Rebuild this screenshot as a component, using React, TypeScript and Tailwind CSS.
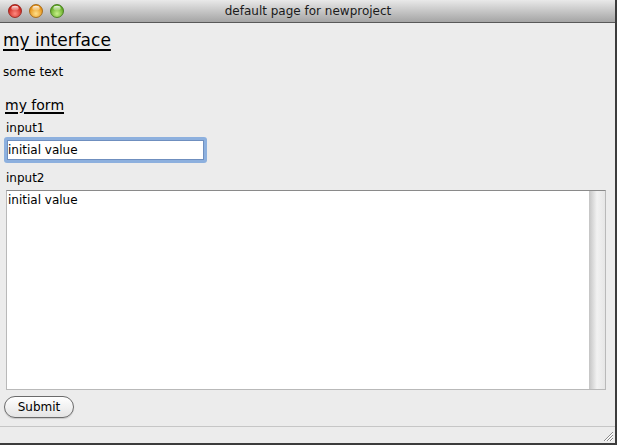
import React from "react";

function Light({ c1, c2, c3, id }: { c1: string; c2: string; c3: string; id: string }) {
  return (
    <svg width="14" height="14" viewBox="0 0 14 14">
      <defs>
        <radialGradient id={`g${id}`} cx="50%" cy="70%" r="60%">
          <stop offset="0%" stopColor={c1} />
          <stop offset="100%" stopColor={c2} />
        </radialGradient>
        <linearGradient id={`h${id}`} x1="0" y1="0" x2="0" y2="1">
          <stop offset="0%" stopColor="#ffffff" stopOpacity="0.9" />
          <stop offset="100%" stopColor="#ffffff" stopOpacity="0.1" />
        </linearGradient>
      </defs>
      <circle cx="7" cy="7" r="6.5" fill={`url(#g${id})`} stroke={c3} strokeWidth="0.8" />
      <ellipse cx="7" cy="4.2" rx="3.6" ry="2.4" fill={`url(#h${id})`} />
    </svg>
  );
}

export default function App() {
  const ui = { fontFamily: '"DejaVu Sans", "Liberation Sans", sans-serif' };
  const comic = { fontFamily: '"Comic Sans MS", "DejaVu Sans", sans-serif' };
  return (
    <div
      className="w-[617px] h-[445px] flex flex-col bg-[#ececec] border-r-2 border-b-2 border-[#3c3c3c] text-black overflow-hidden"
      style={ui}
    >
      {/* title bar */}
      <div className="h-[23px] shrink-0 flex items-center relative bg-gradient-to-b from-[#e9e9e9] to-[#a5a5a5] border-b border-[#595959]">
        <div className="flex items-center gap-[7px] pl-[8px]">
          <Light id="r" c1="#ff8a80" c2="#c91f16" c3="#8e1a14" />
          <Light id="y" c1="#ffe08a" c2="#e38b0c" c3="#9a5d0a" />
          <Light id="g" c1="#c9f08a" c2="#5aa61d" c3="#3b7212" />
        </div>
        <div className="absolute inset-0 flex items-center justify-center text-[12px] text-[#1a1a1a] pl-[1px]">
          default page for newproject
        </div>
      </div>

      {/* content */}
      <div className="flex-1 flex flex-col">
        <div className="pl-[3px] pt-[7px] text-[17px] leading-[20px] underline underline-offset-[3px] decoration-[1.5px]" style={comic}>
          my interface
        </div>
        <div className="pl-[3px] mt-[15px] text-[12px] leading-[15px]">some text</div>
        <div className="pl-[5px] mt-[17px] text-[14px] leading-[17px] underline underline-offset-[2px] decoration-[1.5px]" style={comic}>
          my form
        </div>
        <div className="pl-[6px] mt-[7px] text-[12px] leading-[15px]">input1</div>
        <div className="pl-[4px] mt-[1px] flex">
          <div className="w-[203px] h-[26px] rounded-[3px] bg-[#8db0de] p-[3px]">
            <div className="w-full h-full bg-white border border-[#6f8fbf] flex items-center pl-[0px] text-[12px] leading-[15px]">
              initial value
            </div>
          </div>
        </div>
        <div className="pl-[6px] mt-[8px] text-[12px] leading-[15px]">input2</div>
        <div className="pl-[6px] mt-[4px] flex">
          <div className="w-[600px] h-[200px] bg-white border border-[#b9b9b9] border-t-[#8a8a8a] flex">
            <div className="flex-1 pl-[1px] pt-[2px] text-[12px] leading-[15px]">initial value</div>
            <div className="w-[16px] h-full bg-gradient-to-r from-[#c4c4c4] via-[#f2f2f2] to-[#e6e6e6]" />
          </div>
        </div>
        <div className="pl-[4px] mt-[6px] flex">
          <div className="w-[70px] h-[22px] rounded-full border border-[#6b6b6b] bg-gradient-to-b from-[#ffffff] to-[#e4e4e4] flex items-center justify-center text-[12px] leading-[15px] shadow-[0_1px_1px_rgba(0,0,0,0.15)]">
            Submit
          </div>
        </div>
      </div>

      {/* status bar */}
      <div className="h-[17px] shrink-0 border-t border-[#c6c6c6] flex justify-end items-end">
        <svg width="12" height="12" viewBox="0 0 12 12" className="mr-[1px] mb-[1px]">
          <path d="M11 2 L2 11 M11 5 L5 11 M11 8 L8 11" stroke="#8a8a8a" strokeWidth="1" />
          <path d="M11 3 L3 11 M11 6 L6 11 M11 9 L9 11" stroke="#ffffff" strokeWidth="1" />
        </svg>
      </div>
    </div>
  );
}
